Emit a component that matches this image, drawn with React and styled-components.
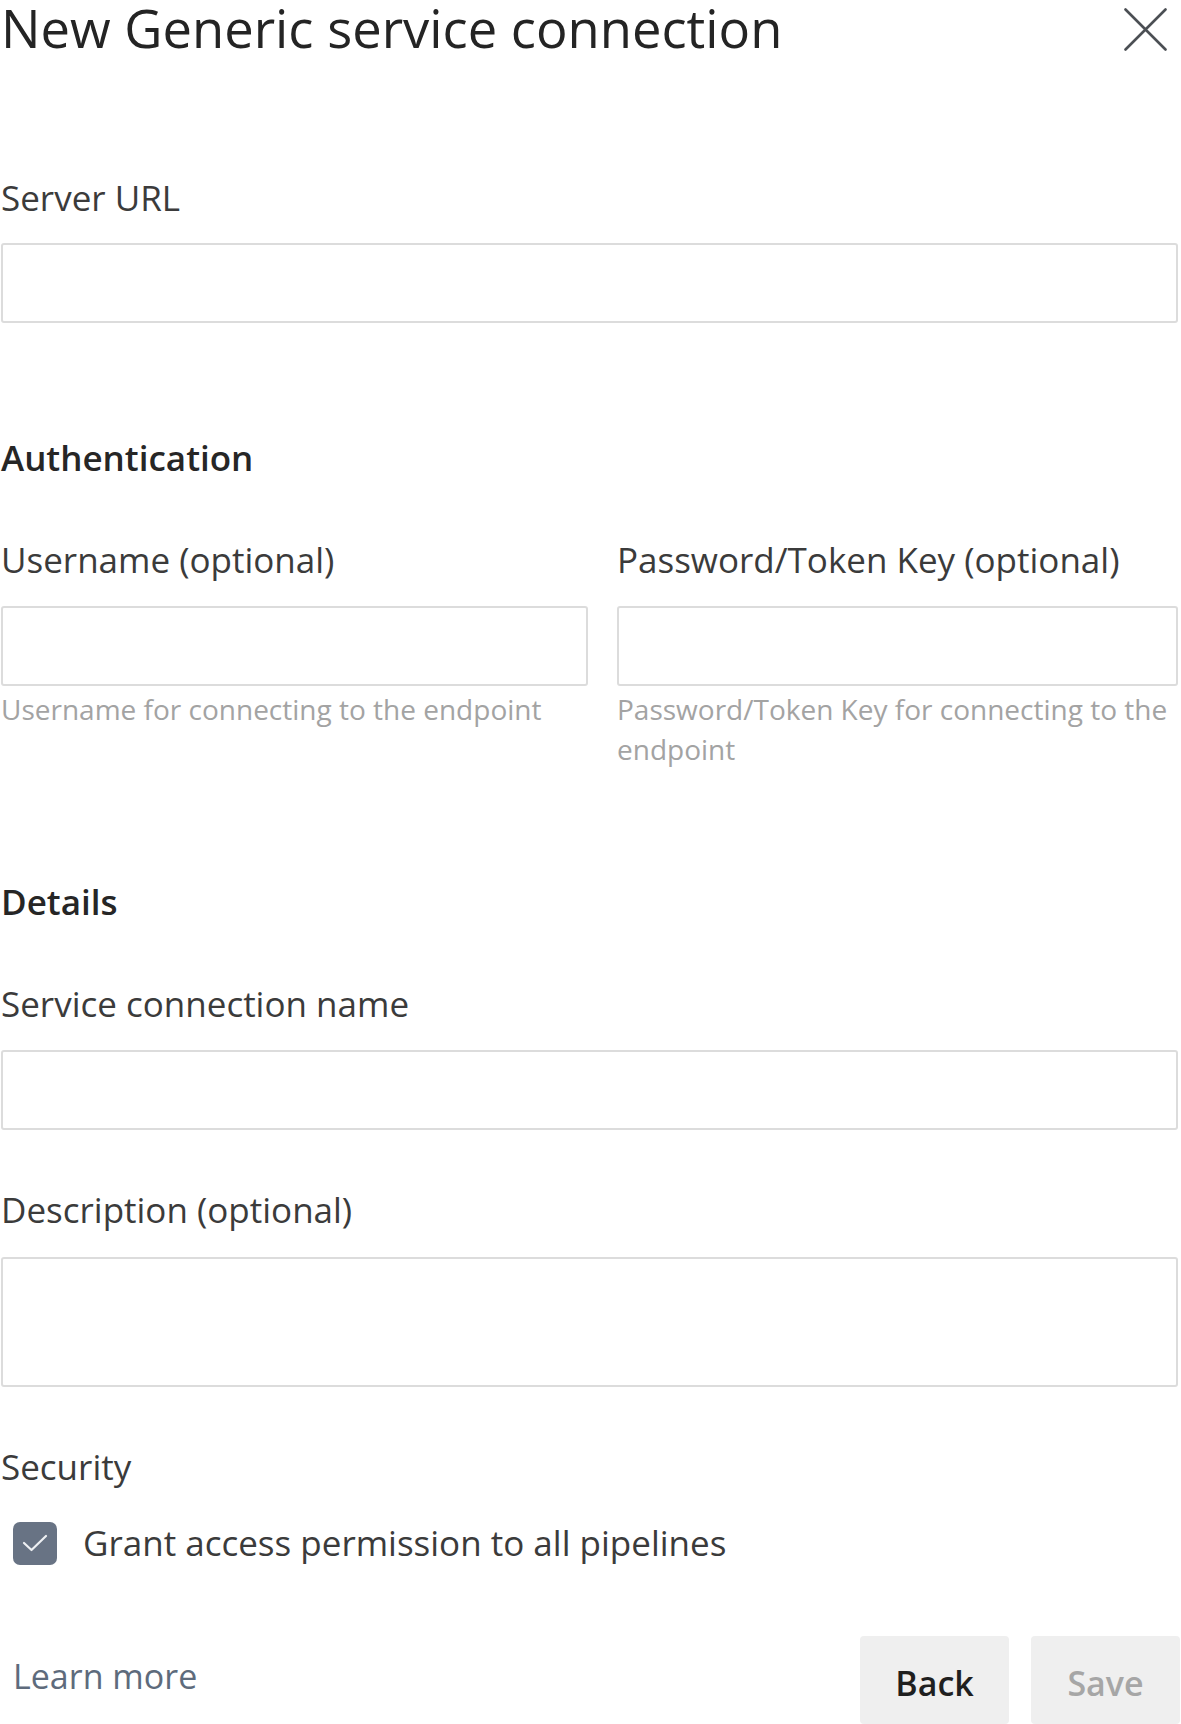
import React from 'react'
import styled, { createGlobalStyle } from 'styled-components'

const GlobalStyle = createGlobalStyle`
  body {
    margin: 0;
    background: #fff;
    font-family: "Open Sans", "Noto Sans", sans-serif;
  }
`

const Panel = styled.div`
  width: 1181px;
  box-sizing: border-box;
  padding: 0 3px 0 1px;
  display: flex;
  flex-direction: column;
`

const Header = styled.header`
  display: flex;
  justify-content: space-between;
  align-items: flex-start;
  height: 58px;
`

const Title = styled.h1`
  margin: 0;
  font-size: 52.5px;
  line-height: 56px;
  font-weight: 400;
  color: #242424;
`

const CloseButton = styled.button`
  width: 58px;
  height: 58px;
  margin-right: 4px;
  padding: 0;
  border: 0;
  background: transparent;
  display: flex;
  align-items: center;
  justify-content: center;
`

const SectionTitle = styled.h2`
  margin: ${({ $top }) => $top}px 0 0;
  font-size: 35px;
  line-height: 46px;
  font-weight: 600;
  color: #262626;
`

const Field = styled.div`
  display: flex;
  flex-direction: column;
  margin-top: ${({ $top }) => $top || 0}px;
`

const Label = styled.label`
  font-size: 35px;
  line-height: 46px;
  color: #3b3b3b;
  margin-bottom: ${({ $gap }) => $gap ?? 22}px;
`

const TextInput = styled.input`
  box-sizing: border-box;
  width: 100%;
  height: 80px;
  margin: 0;
  border: 2px solid #dcdcdc;
  border-radius: 3px;
  background: #fff;
`

const TextArea = styled.textarea`
  box-sizing: border-box;
  width: 100%;
  height: 130px;
  margin: 0;
  border: 2px solid #dcdcdc;
  border-radius: 3px;
  background: #fff;
  resize: none;
`

const Helper = styled.div`
  margin-top: 3px;
  font-size: 28px;
  line-height: 40px;
  color: #a3a3a3;
`

const TwoColumns = styled.div`
  display: grid;
  grid-template-columns: 587px 1fr;
  column-gap: 29px;
  align-items: start;
  margin-top: 56px;
`

const CheckRow = styled.label`
  display: flex;
  align-items: center;
  gap: 26px;
  margin-top: 30px;
  padding-left: 12px;
  font-size: 35px;
  line-height: 46px;
  color: #3b3b3b;
`

const CheckBox = styled.span`
  width: 44px;
  height: 43px;
  border-radius: 7px;
  background: #687384;
  display: flex;
  align-items: center;
  justify-content: center;
  flex-shrink: 0;
`

const Footer = styled.footer`
  display: flex;
  align-items: flex-start;
  margin-top: 70px;
  margin-right: -2px;
`

const LearnMore = styled.a`
  margin: 17px 0 0 12px;
  font-size: 34px;
  line-height: 46px;
  color: #5e6b7c;
  text-decoration: none;
`

const Buttons = styled.div`
  display: flex;
  gap: 22px;
  margin-left: auto;
`

const Button = styled.button`
  width: 149px;
  height: 88px;
  border: 0;
  border-radius: 4px;
  background: #efefef;
  font-family: inherit;
  font-size: 34px;
  font-weight: 600;
  color: ${({ disabled }) => (disabled ? '#a6a6a6' : '#1f1f1f')};
  padding: 6px 0 0;
`

const App = () => {
  return (
    <Panel>
      <GlobalStyle />
      <Header>
        <Title>New Generic service connection</Title>
        <CloseButton aria-label="Close">
          <svg width="43" height="43" viewBox="0 0 43 43">
            <path d="M1.5 1.5 L41.5 41.5 M41.5 1.5 L1.5 41.5" stroke="#4b4f54" strokeWidth="2.6" strokeLinecap="round" />
          </svg>
        </CloseButton>
      </Header>

      <Field $top={117}>
        <Label>Server URL</Label>
        <TextInput />
      </Field>

      <SectionTitle $top={112}>Authentication</SectionTitle>

      <TwoColumns>
        <Field>
          <Label $gap={23}>Username (optional)</Label>
          <TextInput />
          <Helper>Username for connecting to the endpoint</Helper>
        </Field>
        <Field>
          <Label $gap={23}>Password/Token Key (optional)</Label>
          <TextInput type="password" />
          <Helper>Password/Token Key for connecting to the endpoint</Helper>
        </Field>
      </TwoColumns>

      <SectionTitle $top={110}>Details</SectionTitle>

      <Field $top={56}>
        <Label $gap={23}>Service connection name</Label>
        <TextInput />
      </Field>

      <Field $top={57}>
        <Label $gap={24}>Description (optional)</Label>
        <TextArea />
      </Field>

      <Field $top={57}>
        <Label $gap={0}>Security</Label>
      </Field>

      <CheckRow>
        <CheckBox>
          <svg width="26" height="20" viewBox="0 0 26 20">
            <path d="M2 10 L9.5 17 L24 3" fill="none" stroke="#eef0f3" strokeWidth="2.2" strokeLinecap="round" strokeLinejoin="round" />
          </svg>
        </CheckBox>
        Grant access permission to all pipelines
      </CheckRow>

      <Footer>
        <LearnMore href="#">Learn more</LearnMore>
        <Buttons>
          <Button>Back</Button>
          <Button disabled>Save</Button>
        </Buttons>
      </Footer>
    </Panel>
  )
}

export default App
